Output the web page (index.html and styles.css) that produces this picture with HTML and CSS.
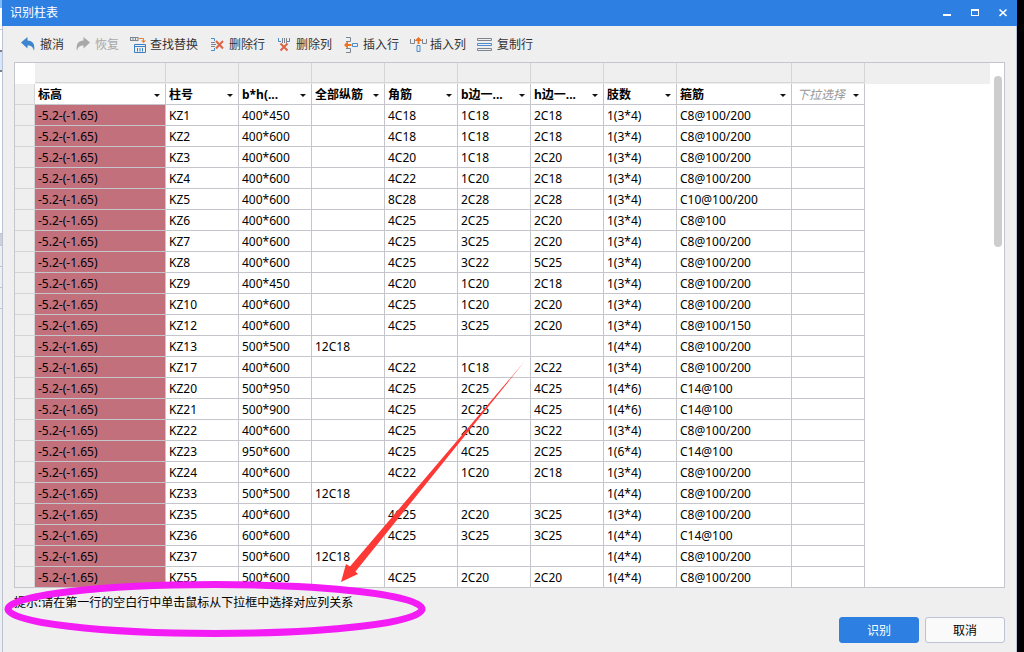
FILE: index.html
```html
<!DOCTYPE html>
<html lang="zh-CN">
<head>
<meta charset="utf-8">
<title>识别柱表</title>
<link rel="stylesheet" href="styles.css">
</head>
<body>
<div class="desktop">
  <div class="backdrop" aria-hidden="true">
    <div class="strip strip-blue"></div>
    <div class="strip strip-plain"></div>
    <div class="strip strip-gap"></div>
    <div class="strip strip-active"></div>
    <div class="strip strip-tall"></div>
    <div class="strip strip-grey"></div>
    <div class="strip strip-rows"></div>
    <div class="strip strip-rows"></div>
    <div class="strip strip-rows"></div>
  </div>
  <main class="dialog">
    <header class="titlebar">
      <h1 class="title">识别柱表</h1>
      <div class="window-controls">
        <button type="button" class="control" aria-label="最小化"><svg width="10" height="10"><path d="M1 6h8v2H1z" fill="#fff"/></svg></button>
        <button type="button" class="control" aria-label="最大化"><svg width="10" height="10"><path d="M1 1h8v7H1zM2 3v4h6V3z" fill="#fff" fill-rule="evenodd"/></svg></button>
        <button type="button" class="control" aria-label="关闭"><svg width="10" height="10"><path d="M1.500 1.500l7 6.500M8.500 1.500l-7 6.500" stroke="#fff" stroke-width="1.700"/></svg></button>
      </div>
    </header>

    <nav class="toolbar">
      <button type="button" class="tool"><svg width="16" height="16"><path d="M0 5.500L6.500 0V3.500C11.500 3.500 14.500 7 13 14C12 10 10.500 8.500 6.500 8.500V11.500Z" fill="#3d85cf"/></svg>撤消</button>
      <button type="button" class="tool" disabled><svg width="16" height="16"><path d="M14 5.500L7.500 0V3.500C2.500 3.500 -.500 7 1 14C2 10 3.500 8.500 7.500 8.500V11.500Z" fill="#a8a8a8"/></svg>恢复</button>
      <button type="button" class="tool"><svg width="16" height="16" fill="none"><path d="M-1 .500h8M-1 3.500h8M-.500 0v4M2 0v4M4.500 0v4M7 0v4" stroke="#7d868e"/><path d="M8 1.500h4.500v3" stroke="#ee7a2c"/><path d="M10 3.500h5l-2.500 2.500z" fill="#ee7a2c"/><path d="M3.500 7.500h11v8h-11zM3 9.500h12M6.500 11v3.500M9 11v3.500M11.500 11v3.500" stroke="#3a7fc5"/></svg>查找替换</button>
      <button type="button" class="tool"><svg width="16" height="16" fill="none"><path d="M1 1.500h3.500v2.500M1 13.500h3.500V11" stroke="#4a8ccc"/><path d="M1 5.500h4M1 7.500h5M1 9.500h4" stroke="#7d868e"/><path d="M6 4l7 7.500M13 4l-7 7.500" stroke="#dc6547" stroke-width="2"/></svg>删除行</button>
      <button type="button" class="tool"><svg width="16" height="16" fill="none"><path d="M1.500 1v3.500H4M12.500 1v3.500H10" stroke="#4a8ccc"/><path d="M5.500 1v5M7.500 1v5M9.500 1v5" stroke="#7d868e"/><path d="M3.500 6.500l7 7M10.500 6.500l-7 7" stroke="#dc6547" stroke-width="2"/></svg>删除列</button>
      <button type="button" class="tool"><svg width="16" height="16" fill="none"><path d="M2 .500h4.500v4H2M2 11.500h4.500v4H2" stroke="#7d868e"/><path d="M2.500 8h5" stroke="#ee7320" stroke-width="2"/><path d="M0 8l4-4v8z" fill="#ee7320"/><path d="M8.500 6.500h5v3h-5z" stroke="#4a8ccc"/></svg>插入行</button>
      <button type="button" class="tool"><svg width="16" height="16" fill="none"><path d="M-.500 2v4.500h4V2M11.500 2v4.500h4V2" stroke="#7d868e"/><path d="M7.500 2v5" stroke="#ee7320" stroke-width="2"/><path d="M7.500 0l4 4h-8z" fill="#ee7320"/><path d="M6 8.500h3v6H6z" stroke="#4a8ccc"/></svg>插入列</button>
      <button type="button" class="tool"><svg width="16" height="16" fill="none"><path d="M-.500 1.500h14v2h-14zM-.500 11.500h14v2h-14z" stroke="#7d868e"/><path d="M-.500 6.500h14v2h-14z" stroke="#4a8ccc"/></svg>复制行</button>
    </nav>

    <section class="sheet">
      <table class="grid">
        <colgroup><col class="c-index"><col class="c-level"><col class="c-std"><col class="c-std"><col class="c-std"><col class="c-std"><col class="c-std"><col class="c-std"><col class="c-std"><col class="c-hoop"><col class="c-std"><col></colgroup>
        <thead>
          <tr class="bands"><td class="corner"></td><td></td><td></td><td></td><td></td><td></td><td></td><td></td><td></td><td></td><td></td><td class="rest"></td></tr>
          <tr class="fields">
            <th class="index"></th>
            <th><div class="pick"><select aria-label="第1列"><option>标高</option></select></div></th>
            <th><div class="pick"><select aria-label="第2列"><option>柱号</option></select></div></th>
            <th><div class="pick"><select aria-label="第3列"><option>b*h(...</option></select></div></th>
            <th><div class="pick"><select aria-label="第4列"><option>全部纵筋</option></select></div></th>
            <th><div class="pick"><select aria-label="第5列"><option>角筋</option></select></div></th>
            <th><div class="pick"><select aria-label="第6列"><option>b边一...</option></select></div></th>
            <th><div class="pick"><select aria-label="第7列"><option>h边一...</option></select></div></th>
            <th><div class="pick"><select aria-label="第8列"><option>肢数</option></select></div></th>
            <th><div class="pick"><select aria-label="第9列"><option>箍筋</option></select></div></th>
            <th><div class="pick unset"><select aria-label="第10列"><option>下拉选择</option></select></div></th>
            <td class="rest"></td>
          </tr>
        </thead>
        <tbody>
          <tr><th class="index"></th><td class="level">-5.2-(-1.65)</td><td>KZ1</td><td>400*450</td><td></td><td>4C18</td><td>1C18</td><td>2C18</td><td>1(3*4)</td><td>C8@100/200</td><td></td><td class="rest"></td></tr>
          <tr><th class="index"></th><td class="level">-5.2-(-1.65)</td><td>KZ2</td><td>400*600</td><td></td><td>4C18</td><td>1C18</td><td>2C18</td><td>1(3*4)</td><td>C8@100/200</td><td></td><td class="rest"></td></tr>
          <tr><th class="index"></th><td class="level">-5.2-(-1.65)</td><td>KZ3</td><td>400*600</td><td></td><td>4C20</td><td>1C18</td><td>2C20</td><td>1(3*4)</td><td>C8@100/200</td><td></td><td class="rest"></td></tr>
          <tr><th class="index"></th><td class="level">-5.2-(-1.65)</td><td>KZ4</td><td>400*600</td><td></td><td>4C22</td><td>1C20</td><td>2C18</td><td>1(3*4)</td><td>C8@100/200</td><td></td><td class="rest"></td></tr>
          <tr><th class="index"></th><td class="level">-5.2-(-1.65)</td><td>KZ5</td><td>400*600</td><td></td><td>8C28</td><td>2C28</td><td>2C28</td><td>1(3*4)</td><td>C10@100/200</td><td></td><td class="rest"></td></tr>
          <tr><th class="index"></th><td class="level">-5.2-(-1.65)</td><td>KZ6</td><td>400*600</td><td></td><td>4C25</td><td>2C25</td><td>2C20</td><td>1(3*4)</td><td>C8@100</td><td></td><td class="rest"></td></tr>
          <tr><th class="index"></th><td class="level">-5.2-(-1.65)</td><td>KZ7</td><td>400*600</td><td></td><td>4C25</td><td>3C25</td><td>2C20</td><td>1(3*4)</td><td>C8@100/200</td><td></td><td class="rest"></td></tr>
          <tr><th class="index"></th><td class="level">-5.2-(-1.65)</td><td>KZ8</td><td>400*600</td><td></td><td>4C25</td><td>3C22</td><td>5C25</td><td>1(3*4)</td><td>C8@100/200</td><td></td><td class="rest"></td></tr>
          <tr><th class="index"></th><td class="level">-5.2-(-1.65)</td><td>KZ9</td><td>400*450</td><td></td><td>4C20</td><td>1C20</td><td>2C18</td><td>1(3*4)</td><td>C8@100/200</td><td></td><td class="rest"></td></tr>
          <tr><th class="index"></th><td class="level">-5.2-(-1.65)</td><td>KZ10</td><td>400*600</td><td></td><td>4C25</td><td>1C20</td><td>2C20</td><td>1(3*4)</td><td>C8@100/200</td><td></td><td class="rest"></td></tr>
          <tr><th class="index"></th><td class="level">-5.2-(-1.65)</td><td>KZ12</td><td>400*600</td><td></td><td>4C25</td><td>3C25</td><td>2C20</td><td>1(3*4)</td><td>C8@100/150</td><td></td><td class="rest"></td></tr>
          <tr><th class="index"></th><td class="level">-5.2-(-1.65)</td><td>KZ13</td><td>500*500</td><td>12C18</td><td></td><td></td><td></td><td>1(4*4)</td><td>C8@100/200</td><td></td><td class="rest"></td></tr>
          <tr><th class="index"></th><td class="level">-5.2-(-1.65)</td><td>KZ17</td><td>400*600</td><td></td><td>4C22</td><td>1C18</td><td>2C22</td><td>1(3*4)</td><td>C8@100/200</td><td></td><td class="rest"></td></tr>
          <tr><th class="index"></th><td class="level">-5.2-(-1.65)</td><td>KZ20</td><td>500*950</td><td></td><td>4C25</td><td>2C25</td><td>4C25</td><td>1(4*6)</td><td>C14@100</td><td></td><td class="rest"></td></tr>
          <tr><th class="index"></th><td class="level">-5.2-(-1.65)</td><td>KZ21</td><td>500*900</td><td></td><td>4C25</td><td>2C25</td><td>4C25</td><td>1(4*6)</td><td>C14@100</td><td></td><td class="rest"></td></tr>
          <tr><th class="index"></th><td class="level">-5.2-(-1.65)</td><td>KZ22</td><td>400*600</td><td></td><td>4C25</td><td>2C20</td><td>3C22</td><td>1(3*4)</td><td>C8@100/200</td><td></td><td class="rest"></td></tr>
          <tr><th class="index"></th><td class="level">-5.2-(-1.65)</td><td>KZ23</td><td>950*600</td><td></td><td>4C25</td><td>4C25</td><td>2C25</td><td>1(6*4)</td><td>C14@100</td><td></td><td class="rest"></td></tr>
          <tr><th class="index"></th><td class="level">-5.2-(-1.65)</td><td>KZ24</td><td>400*600</td><td></td><td>4C22</td><td>1C20</td><td>2C18</td><td>1(3*4)</td><td>C8@100/200</td><td></td><td class="rest"></td></tr>
          <tr><th class="index"></th><td class="level">-5.2-(-1.65)</td><td>KZ33</td><td>500*500</td><td>12C18</td><td></td><td></td><td></td><td>1(4*4)</td><td>C8@100/200</td><td></td><td class="rest"></td></tr>
          <tr><th class="index"></th><td class="level">-5.2-(-1.65)</td><td>KZ35</td><td>400*600</td><td></td><td>4C25</td><td>2C20</td><td>3C25</td><td>1(3*4)</td><td>C8@100/200</td><td></td><td class="rest"></td></tr>
          <tr><th class="index"></th><td class="level">-5.2-(-1.65)</td><td>KZ36</td><td>600*600</td><td></td><td>4C25</td><td>3C25</td><td>3C25</td><td>1(4*4)</td><td>C14@100</td><td></td><td class="rest"></td></tr>
          <tr><th class="index"></th><td class="level">-5.2-(-1.65)</td><td>KZ37</td><td>500*600</td><td>12C18</td><td></td><td></td><td></td><td>1(4*4)</td><td>C8@100/200</td><td></td><td class="rest"></td></tr>
          <tr><th class="index"></th><td class="level">-5.2-(-1.65)</td><td>KZ55</td><td>500*600</td><td></td><td>4C25</td><td>2C20</td><td>2C20</td><td>1(4*4)</td><td>C8@100/200</td><td></td><td class="rest"></td></tr>
        </tbody>
      </table>
      <div class="scrollbar"><div class="thumb"></div></div>
    </section>

    <footer class="footer">
      <p class="hint">提示:请在第一行的空白行中单击鼠标从下拉框中选择对应列关系</p>
      <div class="actions">
        <button type="button" class="btn primary">识别</button>
        <button type="button" class="btn">取消</button>
      </div>
    </footer>
  </main>
  <svg class="markup" width="540" height="652" aria-hidden="true">
    <ellipse cx="215" cy="609" rx="207" ry="24.500" fill="none" stroke="#f41cf4" stroke-width="7"/>
    <path d="M525 361L350 566.500L346 564L341 582L358 574L355.500 571.500Z" fill="#fd3936"/>
  </svg>
</div>
</body>
</html>
```
FILE: styles.css
```css
* { box-sizing: border-box; }

body {
  margin: 0;
  background: #000;
  color: #000;
  font: 12px/18px "Noto Sans", "Noto Sans CJK SC", sans-serif;
}

button, select { font: inherit; color: inherit; }

.desktop {
  position: relative;
  display: flex;
  min-height: 100vh;
  padding-right: 7px;
}

.backdrop { width: 2px; background: #efefef; }
.strip { background: #fff; border-bottom: 1px solid #c4c6cb; }
.strip-blue { height: 8px; background: #7fbcf8; border: 0; }
.strip-plain { height: 22px; }
.strip-gap { height: 22px; border-bottom: 2px solid #7c7f84; }
.strip-active { height: 20px; background: #d6e7fb; border-bottom: 2px solid #7c7f84; }
.strip-tall { height: 162px; }
.strip-grey { height: 12px; background: #cfd0d6; }
.strip-rows { height: 21px; background: #efefef; }

.dialog {
  flex: 1;
  min-width: 0;
  display: flex;
  flex-direction: column;
  background: #efefef;
  box-shadow: inset 1px 0 #bcc3d6, inset -1px 0 #bcc3d6;
}

.titlebar {
  display: flex;
  align-items: center;
  justify-content: space-between;
  height: 26px;
  padding-left: 8px;
  background: #2d80e2;
  color: #fff;
}
.title { margin: 0; font-size: 12px; font-weight: 400; }
.window-controls { display: flex; }
.control {
  width: 28px;
  height: 26px;
  padding: 0;
  border: 0;
  background: none;
  display: grid;
  place-items: center;
}

.toolbar {
  display: flex;
  align-items: center;
  gap: 12px;
  height: 36px;
  padding: 2px 19px 0;
}
.tool {
  display: flex;
  align-items: center;
  gap: 3px;
  padding: 0;
  border: 0;
  background: none;
  color: #333;
  white-space: nowrap;
}
.tool svg { overflow: visible; }
.tool:disabled { color: #a8a8a8; }

.sheet {
  display: flex;
  margin: 0 12px;
  border: 1px solid #c4c6cb;
  border-bottom: 0;
  background: #fff;
}
.grid {
  flex: 1;
  min-width: 0;
  table-layout: fixed;
  border-spacing: 0;
}
.c-index { width: 20px; }
.c-level { width: 131px; }
.c-std { width: 73px; }
.c-hoop { width: 115px; }

.grid td, .grid th {
  height: 21px;
  padding: 2px 3px 0;
  border-right: 1px solid #c4c6cb;
  border-bottom: 1px solid #c4c6cb;
  text-align: left;
  white-space: nowrap;
}
.grid .bands td {
  background: #efefef;
  border-right-color: #d5d5d5;
  border-bottom-color: #efefef;
  box-shadow: inset 0 -1px #d5d5d5;
}
.grid .bands .corner { background: #fff; border-color: #fff; box-shadow: none; }
.grid .bands .rest { border-bottom: 1px solid #efefef; box-shadow: none; }
.grid .rest { border-right: 0; border-bottom: 0; }
.grid .index { background: #efefef; border-color: #d5d5d5; }
.grid .level { background: #c3707d; }
.grid tbody tr:last-child .rest,
.grid tbody tr:last-child .index { border-bottom: 1px solid #c4c6cb; }

.pick { display: flex; align-items: center; }
.pick select {
  flex: 1;
  min-width: 0;
  height: 18px;
  padding: 0;
  border: 0;
  background: none;
  appearance: none;
  font-weight: 700;
}
.pick::after {
  content: "";
  margin-right: 2px;
  border: solid transparent;
  border-width: 3px 3px 0;
  border-top-color: #111;
}
.pick.unset { padding-left: 2px; }
.pick.unset select { color: #999; font-style: italic; font-weight: 400; }

.scrollbar {
  width: 14px;
  padding: 13px 2px 0 4px;
  border-bottom: 1px solid #c4c6cb;
}
.thumb { height: 171px; border-radius: 4px; background: #cdcdcd; }

.footer { padding: 6px 12px 9px; }
.hint { margin: 0 0 5px; }
.actions { display: flex; justify-content: flex-end; gap: 6px; }
.btn {
  width: 80px;
  height: 26px;
  padding: 1px 0 0;
  border: 1px solid #bcc3d6;
  border-radius: 3px;
  background: #fafafa;
}
.primary { border-color: #2d80e2; background: #2d80e2; color: #fff; }

.markup {
  position: absolute;
  left: 0;
  top: 0;
  pointer-events: none;
}
```
